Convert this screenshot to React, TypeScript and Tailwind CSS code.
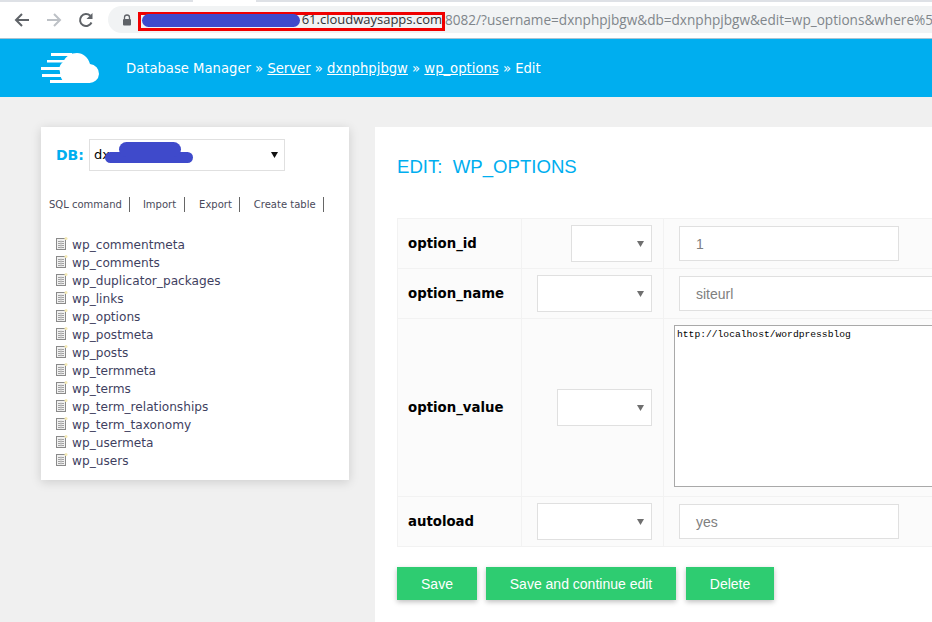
import React from "react";

const tables = ["wp_commentmeta","wp_comments","wp_duplicator_packages","wp_links","wp_options","wp_postmeta","wp_posts","wp_termmeta","wp_terms","wp_term_relationships","wp_term_taxonomy","wp_usermeta","wp_users"];

function TableIcon() {
  return (
    <svg width="12" height="13" viewBox="0 0 12 13" className="shrink-0">
      <rect x="0.5" y="1.5" width="9" height="11" fill="#f0f0f0" stroke="#8a8a8a" />
      <path d="M2 4.5h6M2 6.5h6M2 8.5h6M2 10.5h6" stroke="#a0a0a0" />
      <path d="M5 3.5v8" stroke="#c4c4c4" />
      <circle cx="10" cy="1.5" r="1.5" fill="#f4e9b4" />
    </svg>
  );
}

function Caret({ color = "#6f6f6f" }: { color?: string }) {
  return <svg width="7" height="6" viewBox="0 0 7 6"><path d="M0 0h7L3.5 6z" fill={color} /></svg>;
}

function Sel({ w }: { w: string }) {
  return (
    <div className={`${w} h-[37px] bg-white border border-[#e0e0e0] flex items-center justify-end pr-[7px]`}>
      <Caret />
    </div>
  );
}

function Row({ label, h, sel, children }: { label: string; h: string; sel: string; children: React.ReactNode }) {
  return (
    <div className={`flex ${h} border-b border-[#f2f2f2] bg-[#fbfbfb]`}>
      <div className="w-[124px] shrink-0 border-r border-[#f2f2f2] pl-[10px] flex items-center text-[13.3px] font-bold text-black [font-family:'DejaVu_Sans',sans-serif]">{label}</div>
      <div className="w-[142px] shrink-0 border-r border-[#f2f2f2] flex items-center justify-end pr-[11px]">
        <Sel w={sel} />
      </div>
      <div className="flex-1 flex items-center pl-[15px] min-w-0">{children}</div>
    </div>
  );
}

function Input({ w, v }: { w: string; v: string }) {
  return <div className={`${w} h-[35px] shrink-0 bg-white border border-[#e0e0e0] pl-4 pt-[1px] flex items-center text-[14px] text-[#808080]`}>{v}</div>;
}

export default function App() {
  return (
    <div className="w-[932px] h-[622px] overflow-hidden bg-[#f0f0f0] [font-family:'Liberation_Sans',sans-serif]">
      <div className="h-[38px] bg-white flex flex-col">
        <div className="h-[2px] flex shrink-0">
          <div className="w-[193px] bg-[#dee1e6]" />
          <div className="w-[63px] bg-white" />
          <div className="flex-1 bg-[#dee1e6]" />
        </div>
        <div className="h-[4px] shrink-0" />
        <div className="flex-1 flex items-start relative">
          <div className="w-[108px] h-[27px] shrink-0 flex items-center pl-[14px] gap-[16px]">
            <svg width="16" height="16" viewBox="0 0 16 16" fill="none" stroke="#5f6368" strokeWidth="2"><path d="M15 8H2M8 2 2 8l6 6" /></svg>
            <svg width="16" height="16" viewBox="0 0 16 16" fill="none" stroke="#bdc1c6" strokeWidth="2"><path d="M1 8h13M8 2l6 6-6 6" /></svg>
            <svg width="16" height="16" viewBox="0 0 16 16" fill="none" stroke="#5f6368" strokeWidth="2"><path d="M13.5 10.5A6 6 0 1 1 12.3 3.8" /><path d="M14.5 1v6h-6z" fill="#5f6368" stroke="none" /></svg>
          </div>
          <div className="flex-1 h-[27px] pt-[1px] bg-[#f1f3f4] rounded-l-full flex items-center pl-[14px] text-[13.6px] text-[#80868b] whitespace-nowrap overflow-hidden relative [font-family:'Open_Sans',sans-serif]">
            <svg width="10" height="12" viewBox="0 0 10 12" className="shrink-0 -mt-[1px]"><path d="M2.5 5V3.5a2.5 2.5 0 0 1 5 0V5" fill="none" stroke="#5f6368" strokeWidth="1.3" /><rect x="1" y="5" width="8" height="6.5" rx="1" fill="#5f6368" /></svg>
            <span className="ml-[13px] text-[13px] text-[#303134] w-[297px] text-right shrink-0">61.cloudwaysapps.com</span>
            <span className="ml-[3px]">8082/?username=dxnphpjbgw&amp;db=dxnphpjbgw&amp;edit=wp_options&amp;where%5</span>
          </div>
          <div className="absolute left-[138px] top-[6px] w-[307px] h-[19px] border-[3px] border-[#f00000]" />
          <div className="absolute left-[142px] top-[8px] w-[158px] h-[13px] rounded-full bg-[#3f4acb]" />
        </div>
      </div>

      <div className="h-[59px] border-t border-[#a9c2d0] bg-[#00aeef] flex items-center text-white text-[13.2px] [font-family:'DejaVu_Sans',sans-serif] whitespace-nowrap">
        <svg width="60" height="32" viewBox="0 0 60 32" className="ml-[40px] mr-[26px] shrink-0" fill="#fff">
          <path d="M28 31H49a9.5 9.5 0 0 0 1-19C48 5 43 1 37 1c-6 0-11 3-14 9C19 13 19 17 20 20c0 6 3 11 8 11z" />
          <rect x="11" y="1" width="21" height="3" />
          <rect x="7" y="8" width="20" height="2.5" />
          <rect x="1" y="15" width="20" height="3" />
          <rect x="2" y="22" width="20" height="3" />
          <rect x="10" y="28" width="18" height="3" />
        </svg>
        <span className="pt-[2px]">Database Manager » <u>Server</u> » <u>dxnphpjbgw</u> » <u>wp_options</u> » Edit</span>
      </div>

      <div className="flex items-start pl-[41px] pt-[30px] gap-[26px]">
        <aside className="w-[308px] h-[353px] shrink-0 bg-white shadow-[0_2px_10px_rgba(0,0,0,0.15)] text-[#333] [font-family:'DejaVu_Sans',sans-serif]">
          <div className="flex items-center pl-[15px] pt-[12px] relative">
            <span className="text-[#00aeef] font-bold text-[14px] w-[33px]">DB:</span>
            <div className="w-[196px] h-[32px] border border-[#e0e0e0] flex items-center pl-[4px] pr-[6px] justify-between text-black text-[13px]">
              <span>dx</span><Caret color="#111" />
            </div>
            <div className="absolute left-[64px] top-[25px] w-[88px] h-[11px] rounded-full bg-[#3f4acb]" />
            <div className="absolute left-[78px] top-[15px] w-[62px] h-[15px] rounded-full bg-[#3f4acb]" />
          </div>
          <div className="flex mt-[27px] pl-[8px] text-[10px] text-[#4a4a5a] items-center h-[12px]">
            <span className="pr-[7px] border-r border-[#666]">SQL command</span>
            <span className="ml-[13px] pr-[8px] border-r border-[#666]">Import</span>
            <span className="ml-[14px] pr-[7px] border-r border-[#666]">Export</span>
            <span className="ml-[14px] pr-[7px] border-r border-[#666]">Create table</span>
          </div>
          <ul className="mt-[26px] pl-[15px]">
            {tables.map((t) => (
              <li key={t} className="h-[18px] flex items-center gap-[4px] text-[12.15px] text-[#3f3f5f]"><span className="-mt-[3px] flex"><TableIcon /></span><span className="leading-[18px]">{t}</span></li>
            ))}
          </ul>
        </aside>

        <main className="flex-1 h-[600px] bg-white pl-[22px] min-w-0 overflow-hidden">
          <h1 className="pt-[30px] text-[18.6px] leading-[20px] text-[#00aeef] uppercase">Edit:&nbsp; wp_options</h1>
          <div className="mt-[41px] border-t border-l border-[#f2f2f2] w-[600px]">
            <Row label="option_id" h="h-[50px]" sel="w-[81px]"><Input w="w-[220px]" v="1" /></Row>
            <Row label="option_name" h="h-[50px]" sel="w-[115px]"><Input w="w-[400px]" v="siteurl" /></Row>
            <Row label="option_value" h="h-[178px]" sel="w-[95px]">
              <div className="-ml-[5px] mb-[4px] w-[400px] h-[162px] shrink-0 bg-white border border-[#a9a9a9] px-[2px] pt-[2px] text-[9.67px] leading-[13px] text-black [font-family:'Liberation_Mono',monospace]">http://localhost/wordpressblog</div>
            </Row>
            <Row label="autoload" h="h-[50px]" sel="w-[115px]"><Input w="w-[220px]" v="yes" /></Row>
          </div>
          <div className="flex mt-[20px] text-white text-[14px]">
            <div className="w-[80px] h-[33px] pt-[1px] bg-[#2ecc71] flex items-center justify-center shadow-[0_2px_5px_rgba(0,0,0,0.25)]">Save</div>
            <div className="ml-[9px] w-[190px] h-[33px] pt-[1px] bg-[#2ecc71] flex items-center justify-center shadow-[0_2px_5px_rgba(0,0,0,0.25)]">Save and continue edit</div>
            <div className="ml-[10px] w-[88px] h-[33px] pt-[1px] bg-[#2ecc71] flex items-center justify-center shadow-[0_2px_5px_rgba(0,0,0,0.25)]">Delete</div>
          </div>
        </main>
      </div>
    </div>
  );
}
